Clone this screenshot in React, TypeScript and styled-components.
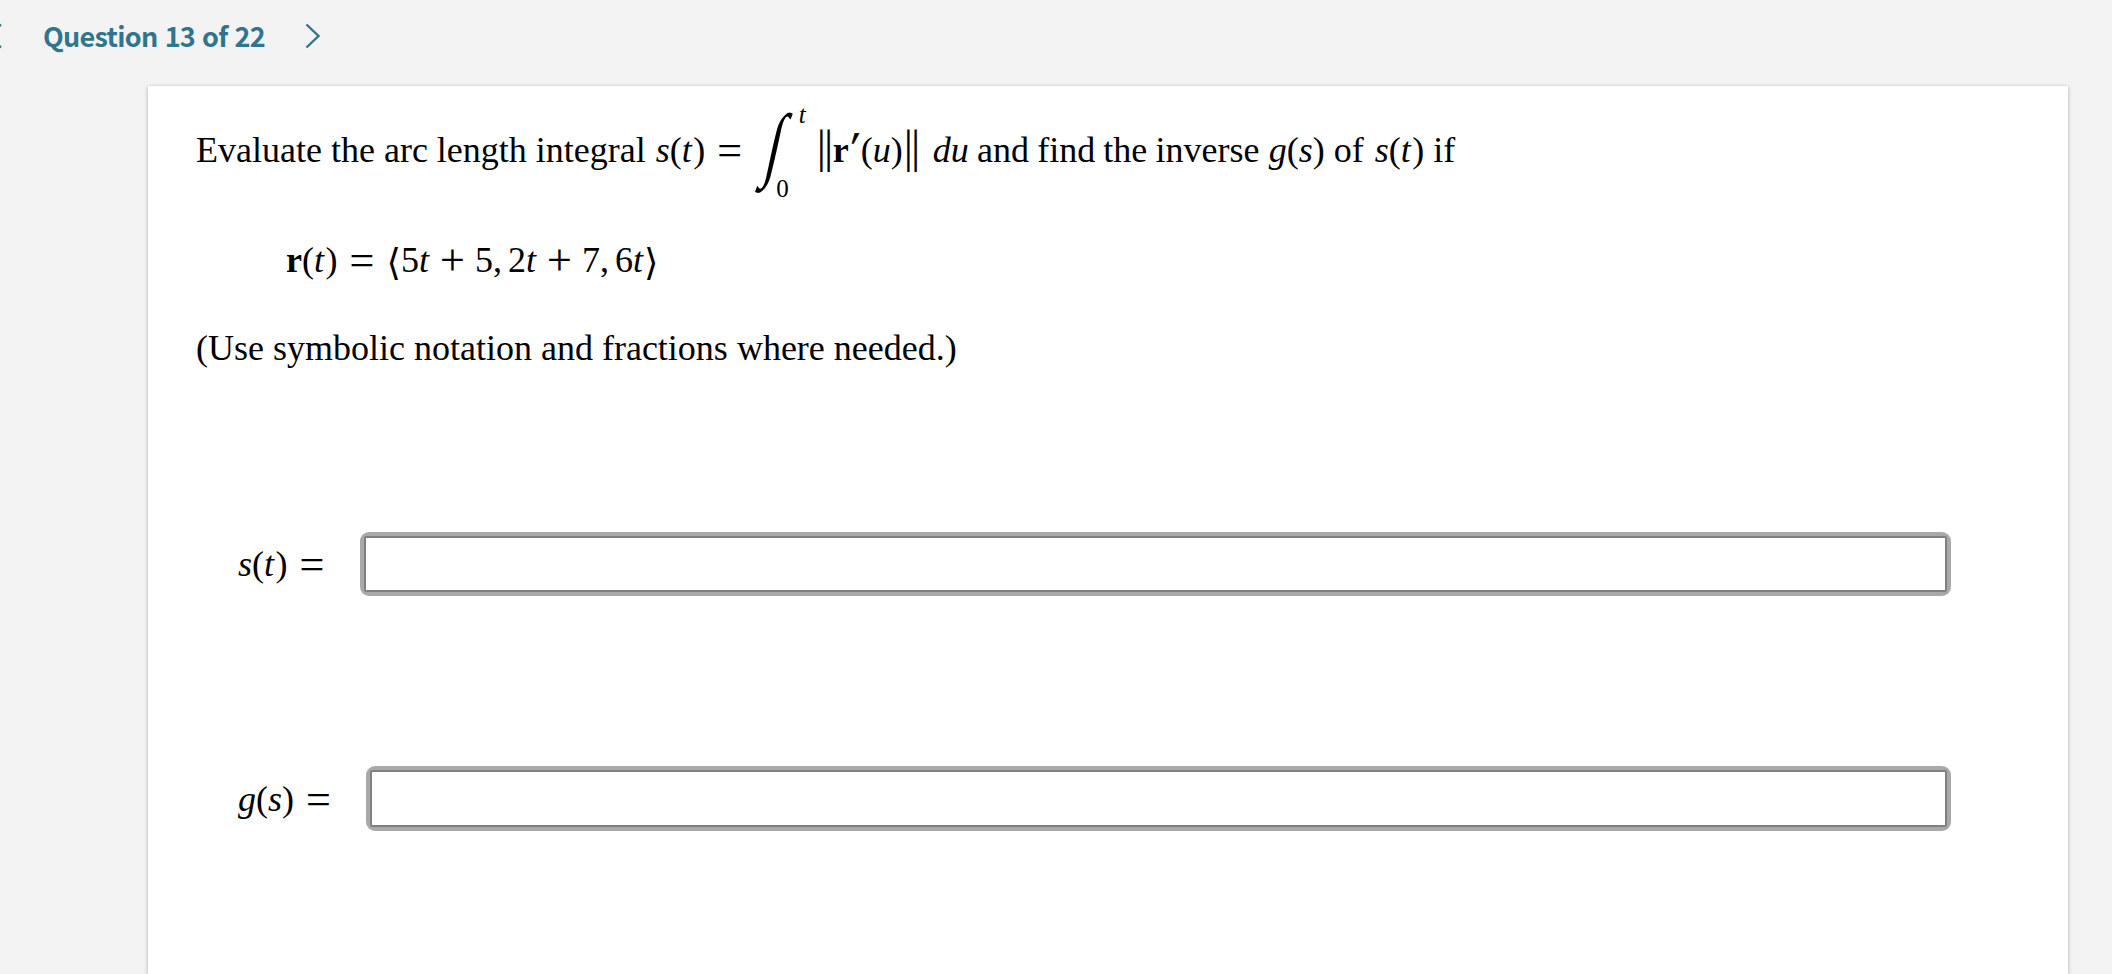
import { useState } from 'react';
import styled, { createGlobalStyle } from 'styled-components';

const GlobalStyle = createGlobalStyle`
  body {
    margin: 0;
    background: #f3f3f3;
    overflow: hidden;
  }
`;

const Page = styled.div`
  display: flex;
  flex-direction: column;
  height: 974px;
  overflow: hidden;
  background: #f3f3f3;
`;

const QuestionNav = styled.nav`
  display: flex;
  align-items: center;
  flex: none;
  height: 72px;
  margin-bottom: 14px;
  color: #2f758e;
`;

const NavButton = styled.button<{ $prev?: boolean }>`
  display: flex;
  padding: 0;
  border: 0;
  background: none;
  color: inherit;
  margin-left: ${({ $prev }) => ($prev ? '-14px' : '40px')};
`;

const QuestionLabel = styled.span`
  margin-left: 41px;
  width: 222px;
  font: 700 27px/38px 'Noto Sans CJK SC', sans-serif;
  letter-spacing: -0.7px;
  word-spacing: 1.6px;
  white-space: nowrap;
`;

const Card = styled.main`
  flex: 1;
  box-sizing: border-box;
  margin: 0 44px 0 148px;
  padding: 26px 117px 0 48px;
  background: #fff;
  box-shadow: 0 1px 4px rgba(0, 0, 0, 0.3);
  font-family: 'Liberation Serif', serif;
  font-size: 36px;
  color: #000;
`;

const Line = styled.div<{ $height: number; $top?: number; $indent?: number }>`
  height: ${({ $height }) => $height}px;
  line-height: ${({ $height }) => $height}px;
  margin-top: ${({ $top }) => $top ?? 0}px;
  padding-left: ${({ $indent }) => $indent ?? 0}px;
  white-space: nowrap;
`;

const Operator = styled.span<{ $binary?: boolean }>`
  display: inline-block;
  width: 24px;
  margin: ${({ $binary }) => ($binary ? '0 11px' : '0 13px 0 12px')};
  font-size: 44px;
  line-height: 0;
  vertical-align: -3px;
  -webkit-text-stroke: 0.15px #000;
`;

const Angle = styled.span`
  font-family: 'DejaVu Sans', sans-serif;
  font-size: 37px;
  line-height: 0;
  vertical-align: -3px;
`;

const IntegralSign = styled.span`
  display: inline-block;
  width: 36px;
  margin-left: 1px;
  font-size: 82px;
  line-height: 0;
  text-indent: 11px;
  vertical-align: -9px;
  transform: skewX(-12.5deg) scaleX(0.66);
`;

const Limit = styled.span<{ $shift: number; $left: number }>`
  font-size: 25px;
  line-height: 0;
  vertical-align: ${({ $shift }) => $shift}px;
  margin-left: ${({ $left }) => $left}px;
`;

const Bars = styled.span`
  display: inline-block;
  width: 16px;
  font-size: 46px;
  letter-spacing: -1.9px;
  line-height: 0;
`;

const Prime = styled.span`
  display: inline-block;
  width: 12px;
  font-size: 44px;
  line-height: 0;
  transform: skewX(-10deg);
  -webkit-text-stroke: 0.5px #000;
`;

const Gap = styled.span<{ $w: number }>`
  display: inline-block;
  width: ${({ $w }) => $w}px;
`;

const Prose = styled.span`
  word-spacing: -0.8px;
`;

const FnName = styled.i`
  margin-left: 1px;
`;

const VarT = styled.i`
  margin-right: 1.5px;
`;

const AnswerRow = styled.label<{ $top: number; $height: number }>`
  display: flex;
  align-items: center;
  height: ${({ $height }) => $height}px;
  margin-top: ${({ $top }) => $top}px;
  padding-left: 41px;
`;

const AnswerLabel = styled.span<{ $width: number }>`
  flex: none;
  width: ${({ $width }) => $width}px;
  white-space: nowrap;
`;

const InputFrame = styled.span`
  display: flex;
  flex: 1;
  align-self: stretch;
  padding: 4px;
  border-radius: 9px;
  background: #a9a9a9;
`;

const AnswerInput = styled.input`
  flex: 1;
  box-sizing: border-box;
  min-width: 0;
  padding: 0 12px;
  border: 2px solid #808080;
  border-radius: 2px;
  background: #fff;
  font: inherit;
  line-height: 1;
  outline: none;
`;

function Chevron({ left }: { left?: boolean }) {
  return (
    <svg width="16" height="26" viewBox="0 0 16 26" fill="none" stroke="currentColor" strokeWidth="2.4">
      <path d={left ? 'M15 1.5 3 13l12 11.5' : 'M1.5 1.5 13.5 13 1.5 24.5'} />
    </svg>
  );
}

function Fn({ name, arg }: { name: string; arg: string }) {
  return (
    <>
      <FnName>{name}</FnName>({arg === 't' ? <VarT>t</VarT> : <i>{arg}</i>})
    </>
  );
}

export default function App() {
  const [answers, setAnswers] = useState({ s: '', g: '' });

  return (
    <Page>
      <GlobalStyle />
      <QuestionNav>
        <NavButton $prev aria-label="Previous">
          <Chevron left />
        </NavButton>
        <QuestionLabel>Question 13 of 22</QuestionLabel>
        <NavButton aria-label="Next">
          <Chevron />
        </NavButton>
      </QuestionNav>

      <Card>
        <Line $height={76}>
          Evaluate the arc length integral <Fn name="s" arg="t" />
          <Operator>=</Operator>
          <IntegralSign>∫</IntegralSign>
          <Limit $shift={-35} $left={-15}>0</Limit>
          <Limit as="i" $shift={39} $left={10}>t</Limit>
          <Gap $w={11} />
          <Bars>||</Bars>
          <b>r</b>
          <Prime>′</Prime>(<i>u</i>)<Gap $w={1} />
          <Bars>||</Bars>
          <Gap $w={13} />
          <i>du</i>
          <Prose> and find the inverse </Prose>
          <Fn name="g" arg="s" /> of <Gap $w={1} />
          <Fn name="s" arg="t" /> if
        </Line>
        <Line $height={60} $top={42} $indent={90}>
          <b>r</b>(<VarT>t</VarT>)<Operator>=</Operator>
          <Angle>⟨</Angle>5<i>t</i>
          <Operator $binary>+</Operator>5,<Gap $w={6} />2<i>t</i>
          <Operator $binary>+</Operator>7,<Gap $w={6} />6<i>t</i>
          <Gap $w={1} />
          <Angle>⟩</Angle>
        </Line>
        <Line $height={40} $top={38}>(Use symbolic notation and fractions where needed.)</Line>

        <AnswerRow $top={164} $height={64}>
          <AnswerLabel $width={123}>
            <Fn name="s" arg="t" />
            <Operator>=</Operator>
          </AnswerLabel>
          <InputFrame>
            <AnswerInput value={answers.s} onChange={(e) => setAnswers({ ...answers, s: e.target.value })} />
          </InputFrame>
        </AnswerRow>
        <AnswerRow $top={170} $height={65}>
          <AnswerLabel $width={129}>
            <Fn name="g" arg="s" />
            <Operator>=</Operator>
          </AnswerLabel>
          <InputFrame>
            <AnswerInput value={answers.g} onChange={(e) => setAnswers({ ...answers, g: e.target.value })} />
          </InputFrame>
        </AnswerRow>
      </Card>
    </Page>
  );
}
